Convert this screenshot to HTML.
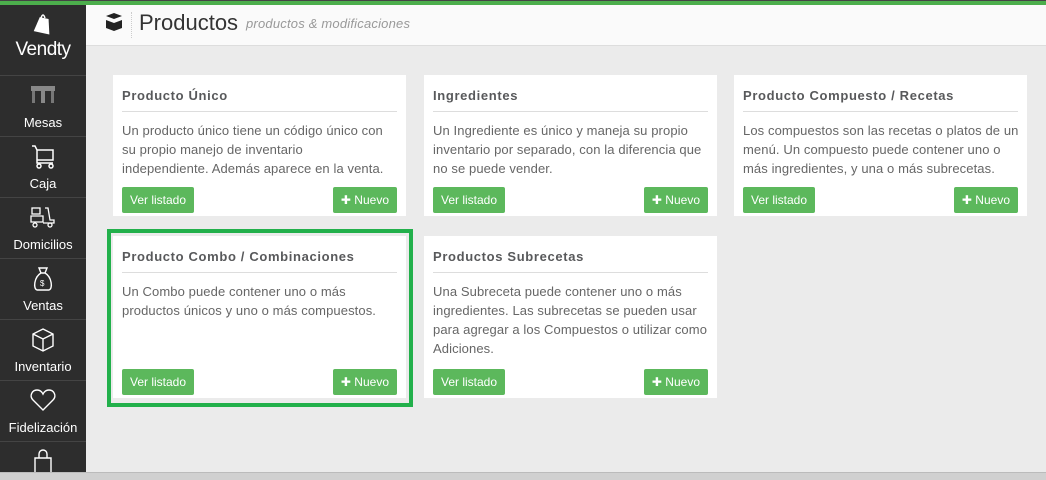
<!DOCTYPE html>
<html><head><meta charset="utf-8"><style>
*{margin:0;padding:0;box-sizing:border-box}
html,body{width:1046px;height:480px;overflow:hidden}
body{background:#ebebeb;font-family:"Liberation Sans",sans-serif;position:relative}
.top{position:absolute;left:0;top:0;width:1046px;height:5px;background:#4cae4c;border-top:1px solid #444}
.side{position:absolute;left:0;top:5px;width:86px;height:467px;background:#2d2d2d;color:#fff}
.logo{height:70px;text-align:center;font-size:19px;padding-top:34px;letter-spacing:-0.5px}
.item{position:absolute;left:0;width:86px;height:61px;border-top:1px solid #444;text-align:center;font-size:13px}
.item span{position:absolute;left:0;right:0;bottom:6px}
.item svg{position:absolute;left:29px;top:6px}
.hdr{position:absolute;left:86px;top:5px;width:960px;height:41px;background:#fafafa;border-bottom:1px solid #ddd}
.hdr .t{position:absolute;left:53px;top:5px;font-size:22px;color:#333}
.hdr .s{position:absolute;left:160px;top:11px;font-size:13px;color:#999;font-style:italic;letter-spacing:0.2px}
.hdr .sep{position:absolute;left:45px;top:7px;height:26px;border-left:1px dotted #ccc}
.card{position:absolute;background:#fff;width:293px;padding:0 9px}
.card h3{font-size:13px;color:#58595b;font-weight:bold;padding-top:13px;height:37px;border-bottom:1px solid #ddd;letter-spacing:0.65px}
.card p{font-size:13px;color:#666;line-height:19px;margin-top:9px;letter-spacing:0.1px;white-space:nowrap}
.btn{position:absolute;bottom:3px;height:26px;background:#5cb85c;color:#fff;font-size:12px;line-height:26px;border-radius:2px;padding:0 8px}
.l{left:9px}.r{right:9px}
.hl{position:absolute;left:107px;top:229px;width:306px;height:178px;border:4px solid #22b04b}
.scroll{position:absolute;left:0;top:472px;width:1046px;height:8px;background:#d0d0d0;border-top:1px solid #bbb}
</style></head><body>
<div class="top"></div>
<div class="side">
<div class="logo"><svg style="position:absolute;left:33px;top:7px" width="20" height="24" viewBox="0 0 20 24"><path d="M5 6 L14 6 L18 21 L2 21 Z" fill="#fff" transform="rotate(12 10 14)"/><path d="M8 6 Q10 0 12 6" stroke="#fff" fill="none" stroke-width="1.5"/></svg>Vendty</div>
<div class="item" style="top:70px"><svg width="28" height="24" viewBox="0 0 28 24"><rect x="2" y="4" width="24" height="5" fill="#888"/><rect x="12" y="9" width="4" height="12" fill="#888"/><rect x="3" y="9" width="3" height="12" fill="#777"/><rect x="22" y="9" width="3" height="12" fill="#777"/></svg><span>Mesas</span></div>
<div class="item" style="top:131px"><svg width="28" height="28" viewBox="0 0 28 28" fill="none" stroke="#fff" stroke-width="1.5"><path d="M3 3h3l2 4h16v10H8V7M8 17v3h16"/><circle cx="10" cy="23" r="2"/><circle cx="22" cy="23" r="2"/></svg><span>Caja</span></div>
<div class="item" style="top:192px"><svg width="28" height="26" viewBox="0 0 28 26" fill="none" stroke="#fff" stroke-width="1.3"><rect x="3" y="4" width="8" height="6"/><path d="M2 12h12v6H2zM16 4h3l2 12h4v3H14"/><circle cx="6" cy="21" r="2"/><circle cx="21" cy="21" r="2"/></svg><span>Domicilios</span></div>
<div class="item" style="top:253px"><svg width="28" height="28" viewBox="0 0 28 28" fill="none" stroke="#fff" stroke-width="1.4"><path d="M10 3h8l-2 5h-4zM12 8C5 12 4 24 8 25h12c4-1 3-13-4-17"/><text x="11" y="21" font-size="8" fill="#fff" stroke="none">$</text></svg><span>Ventas</span></div>
<div class="item" style="top:314px"><svg width="28" height="28" viewBox="0 0 28 28" fill="none" stroke="#fff" stroke-width="1.4"><path d="M14 3l10 5v12l-10 5-10-5V8zM4 8l10 5 10-5M14 13v12"/></svg><span>Inventario</span></div>
<div class="item" style="top:375px"><svg width="28" height="26" viewBox="0 0 28 26" fill="none" stroke="#fff" stroke-width="1.4"><path d="M14 23L4 13C0 9 3 3 8 3c3 0 5 2 6 4 1-2 3-4 6-4 5 0 8 6 4 10z"/></svg><span>Fidelización</span></div>
<div class="item" style="top:436px"><svg width="28" height="28" viewBox="0 0 28 28" fill="none" stroke="#fff" stroke-width="1.4"><path d="M6 10h16v18H6zM10 10V6a4 4 0 0 1 8 0v4"/></svg></div>
</div>
<div class="hdr"><svg style="position:absolute;left:18px;top:8px" width="20" height="18" viewBox="0 0 20 18"><path d="M2 3l8-3 8 3-8 3zM2 7l8 3 8-3v8l-8 3-8-3z" fill="#222"/></svg><div class="sep"></div><div class="t">Productos</div><div class="s">productos &amp; modificaciones</div></div>
<div class="card" style="left:113px;top:75px;height:141px"><h3>Producto Único</h3><p>Un producto único tiene un código único con<br>su propio manejo de inventario<br>independiente. Además aparece en la venta.</p><div class="btn l">Ver listado</div><div class="btn r">✚ Nuevo</div></div>
<div class="card" style="left:424px;top:75px;height:141px"><h3>Ingredientes</h3><p>Un Ingrediente es único y maneja su propio<br>inventario por separado, con la diferencia que<br>no se puede vender.</p><div class="btn l">Ver listado</div><div class="btn r">✚ Nuevo</div></div>
<div class="card" style="left:734px;top:75px;height:141px"><h3>Producto Compuesto / Recetas</h3><p>Los compuestos son las recetas o platos de un<br>menú. Un compuesto puede contener uno o<br>más ingredientes, y una o más subrecetas.</p><div class="btn l">Ver listado</div><div class="btn r">✚ Nuevo</div></div>
<div class="card" style="left:113px;top:236px;height:162px"><h3>Producto Combo / Combinaciones</h3><p>Un Combo puede contener uno o más<br>productos únicos y uno o más compuestos.</p><div class="btn l">Ver listado</div><div class="btn r">✚ Nuevo</div></div>
<div class="card" style="left:424px;top:236px;height:162px"><h3>Productos Subrecetas</h3><p>Una Subreceta puede contener uno o más<br>ingredientes. Las subrecetas se pueden usar<br>para agregar a los Compuestos o utilizar como<br>Adiciones.</p><div class="btn l">Ver listado</div><div class="btn r">✚ Nuevo</div></div>
<div class="hl"></div>
<div class="scroll"></div>
</body></html>
